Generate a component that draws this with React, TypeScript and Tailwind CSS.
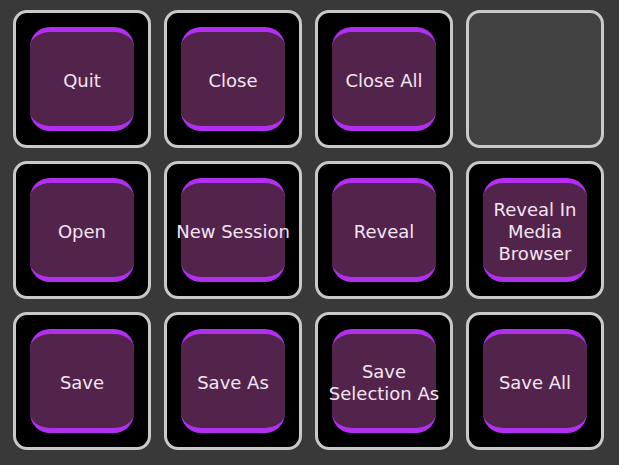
import React from 'react';

interface Pad {
  id: string;
  lines: string[] | null;
}

const pads: Pad[] = [
  { id: 'quit', lines: ['Quit'] },
  { id: 'close', lines: ['Close'] },
  { id: 'close-all', lines: ['Close All'] },
  { id: 'empty', lines: null },
  { id: 'open', lines: ['Open'] },
  { id: 'new-session', lines: ['New Session'] },
  { id: 'reveal', lines: ['Reveal'] },
  { id: 'reveal-media', lines: ['Reveal In', 'Media', 'Browser'] },
  { id: 'save', lines: ['Save'] },
  { id: 'save-as', lines: ['Save As'] },
  { id: 'save-selection', lines: ['Save', 'Selection As'] },
  { id: 'save-all', lines: ['Save All'] },
];

export default function App() {
  return (
    <div className="w-[619px] h-[465px] bg-[#393939] pl-[13px] pt-[10px] font-['DejaVu_Sans',sans-serif]">
      <div className="grid grid-cols-[repeat(4,138px)] grid-rows-[repeat(3,138px)] gap-[13px]">
        {pads.map((pad) =>
          pad.lines === null ? (
            <div
              key={pad.id}
              className="rounded-[14px] border-[3px] border-[#c9c9c9] bg-[#414141]"
            />
          ) : (
            <div
              key={pad.id}
              className="rounded-[14px] border-[3px] border-[#c9c9c9] bg-black flex items-center justify-center"
            >
              <div className="w-[104px] h-[104px] rounded-[20px] bg-[#53244b] border-y-[5px] border-[#b22ff2] pt-[3px] flex flex-col items-center justify-center">
                {pad.lines.map((line) => (
                  <span
                    key={line}
                    className="whitespace-nowrap text-[18px] leading-[22px] text-[#f4e4f1]"
                  >
                    {line}
                  </span>
                ))}
              </div>
            </div>
          )
        )}
      </div>
    </div>
  );
}
